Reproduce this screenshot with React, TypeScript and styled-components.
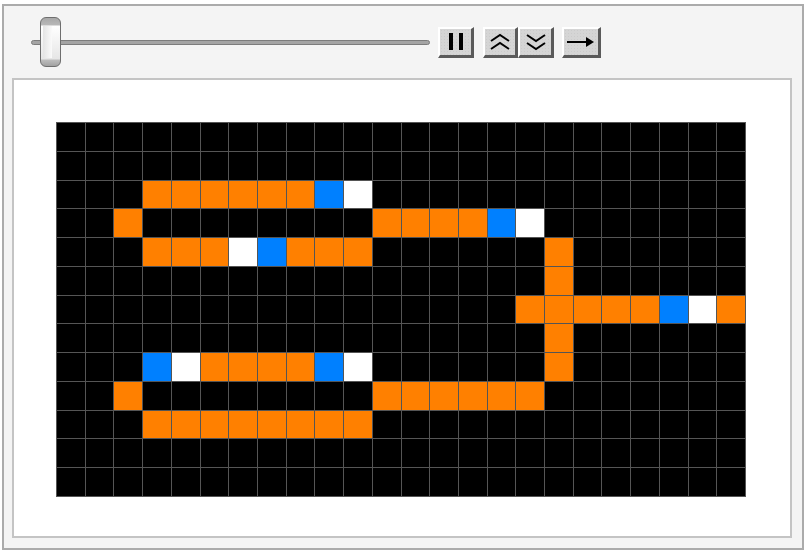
import React from 'react';
import styled, { createGlobalStyle } from 'styled-components';

const GlobalStyle = createGlobalStyle`
    html, body {
        margin: 0;
        padding: 0;
        background: #ffffff;
        font-family: "Liberation Sans", Arial, sans-serif;
    }
`;

const Frame = styled.div`
    box-sizing: border-box;
    width: 802px;
    height: 546px;
    margin: 4px 0 0 2px;
    border: 2px solid #ababab;
    background: #f4f4f4;
    display: flex;
    flex-direction: column;
    padding: 0 9px 9px 8px;
`;

const Controls = styled.div`
    height: 72px;
    display: flex;
    align-items: center;
    padding-left: 19px;
`;

const Slider = styled.div`
    position: relative;
    width: 399px;
    height: 50px;
    display: flex;
    align-items: center;
    margin-right: 8px;
`;

const Track = styled.div`
    box-sizing: border-box;
    width: 100%;
    height: 5px;
    border-radius: 3px;
    background: #a4a4a4;
    border: 1px solid #7c7c7c;
`;

const Thumb = styled.div`
    position: absolute;
    left: 9px;
    top: 0;
    box-sizing: border-box;
    width: 21px;
    height: 50px;
    border: 1px solid #6e6e6e;
    border-radius: 6px;
    background: linear-gradient(
        to bottom,
        #a8a8a8 0px,
        #b8b8b8 7px,
        #ffffff 8px,
        #e6e6e6 41px,
        #bdbdbd 42px,
        #a2a2a2 100%
    );

    &::after {
        content: '';
        position: absolute;
        left: 2px;
        right: 8px;
        top: 8px;
        bottom: 8px;
        background: linear-gradient(to right, #e4e4e4, #fafafa);
    }
`;

const Button = styled.div<{ $w: number; $gap?: number }>`
    box-sizing: border-box;
    width: ${p => p.$w}px;
    height: 31px;
    margin-left: ${p => p.$gap ?? 0}px;
    background-color: #d5d5d5;
    background-image: radial-gradient(#cbcbcb 0.6px, transparent 0.7px);
    background-size: 3px 3px;
    border-top: 2px solid #ffffff;
    border-left: 2px solid #ffffff;
    border-right: 3px solid #5a5a5a;
    border-bottom: 3px solid #5a5a5a;
    display: flex;
    align-items: center;
    justify-content: center;
`;

const PauseBar = styled.span`
    display: block;
    width: 4px;
    height: 17px;
    background: #000;
    margin: 0 3px;
`;

const Panel = styled.div`
    box-sizing: border-box;
    width: 780px;
    height: 460px;
    background: #ffffff;
    border: 2px solid #c4c4c4;
    padding: 42px;
`;

const Board = styled.div`
    box-sizing: border-box;
    width: 690px;
    height: 375px;
    display: grid;
    grid-template-columns: repeat(24, 1fr);
    grid-template-rows: repeat(13, 1fr);
    gap: 1px;
    padding: 1px;
    background: #555555;
`;

const colors: Record<string, string> = {
    '.': '#000000',
    o: '#ff8000',
    b: '#0080ff',
    w: '#ffffff',
};

const Cell = styled.div<{ $c: string }>`
    background: ${p => colors[p.$c]};
`;

const rows = [
    '........................',
    '........................',
    '...oooooobw.............',
    '..o........oooobw.......',
    '...ooowbooo......o......',
    '.................o......',
    '................ooooobwo',
    '.................o......',
    '...bwoooobw......o......',
    '..o........oooooo.......',
    '...oooooooo.............',
    '........................',
    '........................',
];

const ChevronsUp = () => (
    <svg width="22" height="20" viewBox="0 0 22 20">
        <polyline points="2,9 11,3 20,9" fill="none" stroke="#000" strokeWidth="2" />
        <polyline points="2,17 11,11 20,17" fill="none" stroke="#000" strokeWidth="2" />
    </svg>
);

const ChevronsDown = () => (
    <svg width="22" height="20" viewBox="0 0 22 20">
        <polyline points="2,3 11,9 20,3" fill="none" stroke="#000" strokeWidth="2" />
        <polyline points="2,11 11,17 20,11" fill="none" stroke="#000" strokeWidth="2" />
    </svg>
);

const ArrowRight = () => (
    <svg width="28" height="12" viewBox="0 0 28 12">
        <line x1="0" y1="6" x2="21" y2="6" stroke="#000" strokeWidth="2" />
        <polygon points="19,1 27,6 19,11" fill="#000" />
    </svg>
);

export default function App() {
    return (
        <>
            <GlobalStyle />
            <Frame>
                <Controls>
                    <Slider>
                        <Track />
                        <Thumb />
                    </Slider>
                    <Button $w={36}>
                        <PauseBar />
                        <PauseBar />
                    </Button>
                    <Button $w={35} $gap={9}>
                        <ChevronsUp />
                    </Button>
                    <Button $w={36}>
                        <ChevronsDown />
                    </Button>
                    <Button $w={39} $gap={8}>
                        <ArrowRight />
                    </Button>
                </Controls>
                <Panel>
                    <Board>
                        {rows.map((row, r) =>
                            row.split('').map((c, i) => <Cell key={`${r}-${i}`} $c={c} />)
                        )}
                    </Board>
                </Panel>
            </Frame>
        </>
    );
}
